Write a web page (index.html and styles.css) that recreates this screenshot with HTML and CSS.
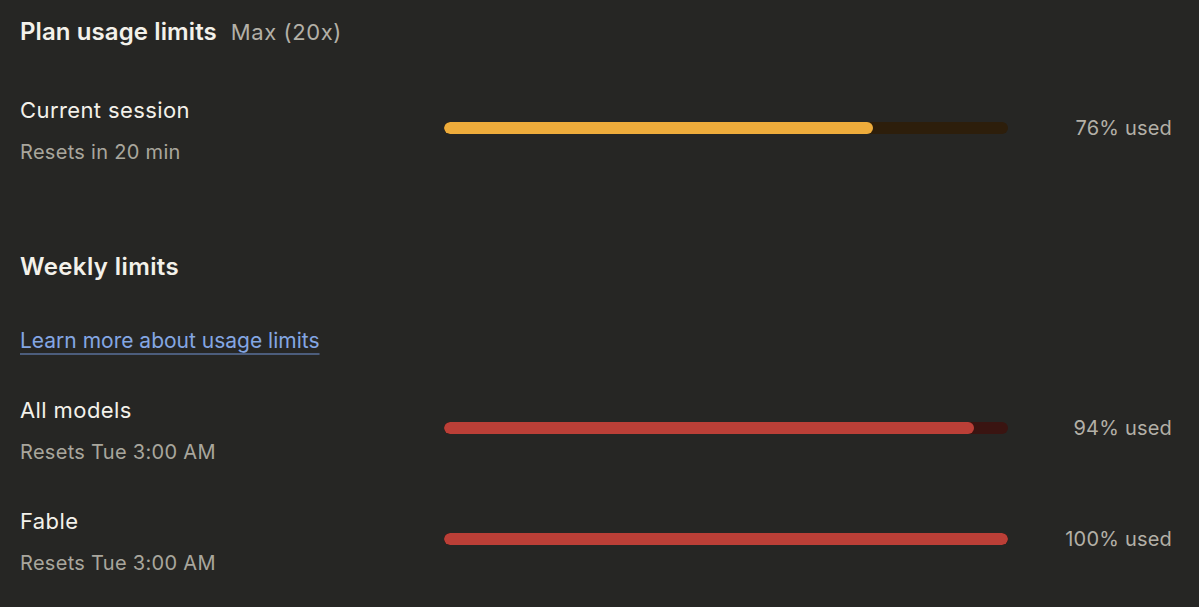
FILE: index.html
```html
<!DOCTYPE html>
<html lang="en">
<head>
    <meta charset="UTF-8">
    <meta name="viewport" content="width=device-width, initial-scale=1.0">
    <title>Usage</title>
    <link rel="stylesheet" href="styles.css">
</head>
<body>
    <div class="usage">
        <div class="usage-head">
            <h2 class="usage-title">Plan usage limits</h2>
            <span class="usage-plan">Max (20x)</span>
        </div>

        <div class="limit-row row-session">
            <div class="limit-label">
                <div class="limit-name">Current session</div>
                <div class="limit-reset">Resets in 20 min</div>
            </div>
            <div class="bar bar-amber"><div class="bar-fill" style="width:76%"></div></div>
            <div class="limit-value">76% used</div>
        </div>

        <h3 class="section-title">Weekly limits</h3>
        <a class="learn-link" href="#">Learn more about usage limits</a>

        <div class="limit-row">
            <div class="limit-label">
                <div class="limit-name">All models</div>
                <div class="limit-reset">Resets Tue 3:00 AM</div>
            </div>
            <div class="bar bar-red"><div class="bar-fill" style="width:94%"></div></div>
            <div class="limit-value">94% used</div>
        </div>

        <div class="limit-row">
            <div class="limit-label">
                <div class="limit-name">Fable</div>
                <div class="limit-reset">Resets Tue 3:00 AM</div>
            </div>
            <div class="bar bar-red"><div class="bar-fill" style="width:100%"></div></div>
            <div class="limit-value">100% used</div>
        </div>
    </div>
</body>
</html>
```

FILE: styles.css
```css
*{margin: 0;padding: 0;box-sizing: border-box;}
html,body{background: #262624;}
body{font-family: "Inter", "Noto Sans", sans-serif;color: #f3f1ea;}

.usage{padding: 11px 27px 0 20px;}

.usage-head{display: flex;align-items: baseline;gap: 14px;height: 42px;line-height: 42px;}
.usage-title{font-size: 24px;font-weight: 600;letter-spacing: 0.1px;}
.usage-plan{font-size: 22px;color: #b3b0a7;letter-spacing: 0.6px;}

.limit-row{display: grid;grid-template-columns: 424px 564px 1fr;align-items: center;margin-top: 27px;}
.row-session{margin-top: 36px;}
.limit-name{font-size: 22px;line-height: 42px;letter-spacing: 0.4px;}
.limit-reset{font-size: 20px;line-height: 42px;color: #a9a69d;letter-spacing: 0.3px;}

.bar{height: 12px;border-radius: 6px;overflow: hidden;margin-bottom: 6px;}
.bar-fill{height: 100%;border-radius: 6px;}
.bar-amber{background: #2d1e0b;}
.bar-amber .bar-fill{background: #eeac3b;}
.bar-red{background: #3a1411;}
.bar-red .bar-fill{background: #bb3f37;}

.limit-value{text-align: right;font-size: 20px;color: #b3b0a7;margin-bottom: 6px;letter-spacing: 0.2px;}

.section-title{font-size: 24px;font-weight: 600;line-height: 42px;margin-top: 73px;letter-spacing: 0.4px;}

.learn-link{display: inline-block;margin-top: 32px;font-size: 21px;line-height: 42px;color: #84a6e3;text-decoration: underline;text-decoration-color: #4c5d7c;text-underline-offset: 5px;}
```
